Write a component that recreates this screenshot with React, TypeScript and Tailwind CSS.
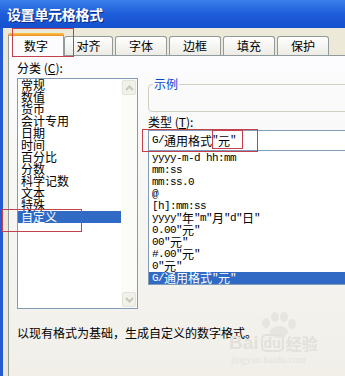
import React from "react";

const leftItems = ["常规", "数值", "货币", "会计专用", "日期", "时间", "百分比", "分数", "科学记数", "文本", "特殊", "自定义"];
const fmtItems = [
  "yyyy-m-d hh:mm",
  "mm:ss",
  "mm:ss.0",
  "@",
  "[h]:mm:ss",
  'yyyy"年"m"月"d"日"',
  '0.00"元"',
  '00"元"',
  '#.00"元"',
  '0"元"',
  'G/通用格式"元"',
];

function Mixed({ text }: { text: string }) {
  const parts = text.match(/[\x00-\x7F]+|[^\x00-\x7F]+/g) || [];
  return (
    <>
      {parts.map((p, i) =>
        /^[\x00-\x7F]/.test(p) ? (
          <span key={i} className="font-['Liberation_Mono',monospace] text-[11px] tracking-[-0.6px] whitespace-pre">
            {p}
          </span>
        ) : (
          <span key={i} className="text-[12px]">
            {p}
          </span>
        )
      )}
    </>
  );
}

function Tab({ label, w, ml }: { label: string; w: string; ml: string }) {
  return (
    <div
      className={`${w} ${ml} h-[19px] flex items-center justify-center border border-b-0 border-[#919B9C] rounded-t-[3px] bg-gradient-to-b from-[#FFFFFF] to-[#ECEBE5] text-[12px] leading-none`}
    >
      {label}
    </div>
  );
}

function Arrow({ up }: { up: boolean }) {
  return (
    <div className="h-[15px] mx-[1px] rounded-[2px] border border-[#E4E3DA] bg-[#F1F0E9] flex items-center justify-center">
      <svg width="9" height="6" viewBox="0 0 9 6">
        <polyline
          points={up ? "1,5 4.5,1.5 8,5" : "1,1 4.5,4.5 8,1"}
          fill="none"
          stroke="#C8C7BC"
          strokeWidth="2"
        />
      </svg>
    </div>
  );
}

export default function App() {
  return (
    <div className="w-[345px] h-[376px] overflow-hidden relative flex flex-col bg-[#ECE9D8] text-black font-['Noto_Sans_CJK_SC',sans-serif]">
      {/* Title bar */}
      <div className="h-[28px] shrink-0 flex items-center pl-[7px] bg-gradient-to-b from-[#3A7FEA] via-[#1E5DDA] to-[#1450CF]">
        <span className="text-white font-bold text-[14px] leading-none tracking-[-0.3px] [text-shadow:1px_1px_0_#0B2C85]">
          设置单元格格式
        </span>
      </div>

      <div className="flex flex-1 min-h-0">
        <div className="w-[3px] shrink-0 bg-[#245BD3]" />
        <div className="flex-1 flex flex-col pl-[5px] min-w-0">
          {/* Tab strip */}
          <div className="h-[27px] shrink-0 flex items-end">
            <div className="w-[56px] h-[23px] -mb-px relative z-10 border border-b-0 border-[#919B9C] rounded-t-[3px] bg-[#FCFCFE] flex flex-col">
              <div className="h-[3px] -mx-px -mt-px rounded-t-[3px] bg-gradient-to-b from-[#FFC83C] to-[#E68B2C]" />
              <div className="flex-1 flex items-center justify-center text-[12px] leading-none pb-[1px]">数字</div>
            </div>
            <Tab label="对齐" w="w-[49px]" ml="ml-0" />
            <Tab label="字体" w="w-[52px]" ml="ml-[2px]" />
            <Tab label="边框" w="w-[52px]" ml="ml-[2px]" />
            <Tab label="填充" w="w-[52px]" ml="ml-[2px]" />
            <Tab label="保护" w="w-[52px]" ml="ml-[2px]" />
          </div>

          {/* Panel */}
          <div className="flex-1 w-[400px] border-l border-t border-[#919B9C] bg-gradient-to-b from-[#FCFCFE] to-[#F1EFE8] pl-[8px] pt-[4px] flex flex-col">
            <div className="flex">
              {/* Left column */}
              <div className="w-[121px] shrink-0 flex flex-col">
                <div className="h-[16px] leading-[16px] text-[12px]">
                  分类 (<span className="underline">C</span>):
                </div>
                <div className="mt-[2px] h-[231px] border border-[#7F9DB9] bg-white flex">
                  <div className="flex-1 flex flex-col">
                    {leftItems.map((t) => (
                      <div
                        key={t}
                        className={`h-[12px] leading-[12px] text-[12px] pl-[3px] ${
                          t === "自定义" ? "bg-[#316AC5] text-white" : ""
                        }`}
                      >
                        {t}
                      </div>
                    ))}
                  </div>
                  <div className="w-[16px] shrink-0 flex flex-col justify-between py-[1px] bg-[#FBFBF8]">
                    <Arrow up={true} />
                    <Arrow up={false} />
                  </div>
                </div>
              </div>

              {/* Right column */}
              <div className="w-[250px] shrink-0 ml-[10px] flex flex-col">
                <div className="mt-[24px] h-[28px] relative border border-[#D0D0BF] rounded-[4px]">
                  <span className="absolute -top-[9px] left-[4px] px-[1px] bg-[#FBFBFC] text-[#0046D5] text-[12px] leading-[16px]">
                    示例
                  </span>
                </div>
                <div className="mt-[2px] h-[16px] leading-[16px] text-[12px]">
                  类型 (<span className="underline">T</span>):
                </div>
                <div className="h-[21px] border border-[#7F9DB9] bg-white flex items-center pl-[3px] leading-none">
                  <Mixed text={'G/通用格式"元"'} />
                </div>
                <div className="h-[134px] border border-t-0 border-[#7F9DB9] bg-white flex flex-col pt-[1px]">
                  {fmtItems.map((t, i) => (
                    <div
                      key={t}
                      className={`h-[12px] leading-[12px] flex items-center pl-[3px] ${
                        i === fmtItems.length - 1 ? "bg-[#316AC5] text-white" : ""
                      }`}
                    >
                      <Mixed text={t} />
                    </div>
                  ))}
                </div>
              </div>
            </div>

            <div className="mt-[18px] h-[12px] leading-[12px] text-[12px]">
              以现有格式为基础，生成自定义的数字格式。
            </div>
          </div>
        </div>
      </div>

      {/* Watermark */}
      <div className="absolute left-[229px] top-[312px] w-[100px] h-[56px] pointer-events-none">
        <svg className="absolute left-[28px] top-0" width="44" height="26" viewBox="0 0 44 26">
          <g fill="#E6E5E0">
            <ellipse cx="9" cy="11" rx="4" ry="5" />
            <ellipse cx="18" cy="5" rx="4" ry="5" />
            <ellipse cx="27" cy="5" rx="4" ry="5" />
            <ellipse cx="35" cy="12" rx="4" ry="5" />
            <ellipse cx="22" cy="20" rx="9" ry="6" />
          </g>
        </svg>
        <div className="absolute left-0 top-[21px] flex items-center gap-[2px] font-['Liberation_Sans',sans-serif] font-bold text-[19px] leading-none text-[#E2E1DC]">
          <span>Bai</span>
          <span className="rounded-[5px] border-2 border-[#E2E1DC] px-[1px] text-[14px]">du</span>
          <span className="font-['Noto_Sans_CJK_SC',sans-serif] text-[16px]">经验</span>
        </div>
        <div className="absolute left-[2px] top-[43px] font-['Liberation_Serif',serif] text-[10px] leading-none text-[#E4E3DE]">
          jingyan.baidu.com
        </div>
      </div>

      {/* Red annotation boxes */}
      <div className="absolute left-[12px] top-[28px] w-[62px] h-[29px] border border-[#C4404F] z-20" />
      <div className="absolute left-[2px] top-[209px] w-[80px] h-[23px] border border-[#C4404F] z-20" />
      <div className="absolute left-[142px] top-[129px] w-[116px] h-[23px] border border-[#C4404F] z-20" />
      <div className="absolute left-[212px] top-[130px] w-[31px] h-[19px] border border-[#C4404F] z-20" />
    </div>
  );
}
